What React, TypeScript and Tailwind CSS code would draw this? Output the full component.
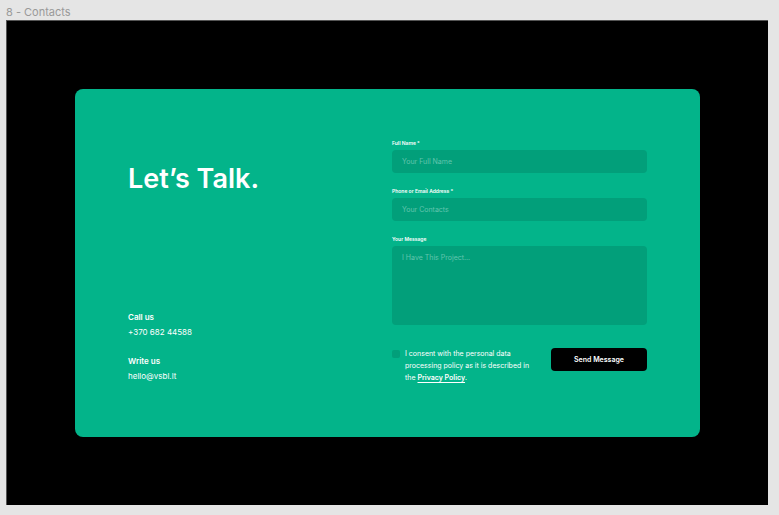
import type { ReactNode } from "react";

const fieldClass =
  "block w-full rounded bg-[#029f7a] px-[10px] text-[7px] text-white outline-none placeholder:text-[#62c5ae] placeholder:opacity-100";

function Field({ id, label, children }: { id: string; label: string; children: ReactNode }) {
  return (
    <div className="flex flex-col gap-[3px]">
      <label htmlFor={id} className="text-[5px] font-semibold leading-[8px]">
        {label}
      </label>
      {children}
    </div>
  );
}

function Contact({ title, value, href }: { title: string; value: string; href: string }) {
  return (
    <div>
      <h2 className="text-[8px] font-semibold leading-4">{title}</h2>
      <a href={href} className="block text-[8px] leading-[15px]">
        {value}
      </a>
    </div>
  );
}

export default function App() {
  return (
    <div className="flex min-h-screen flex-col bg-[#e5e5e5] pb-[10px] pl-[6px] pr-[11px] font-[Inter,sans-serif]">
      <p className="pt-1 text-[11px] leading-4 text-[#999999]">8 - Contacts</p>
      <main className="flex flex-1 flex-col border-l border-t border-[#555555] bg-black p-[68px]">
        <section className="grid flex-1 grid-cols-2 gap-[9px] rounded-lg bg-[#03b48a] px-[53px] pb-[53px] pt-[50px] text-white">
          <div className="flex flex-col justify-between">
            <h1 className="pt-5 text-[27px] font-semibold leading-10">Let’s Talk.</h1>
            <address className="flex flex-col gap-[13px] not-italic">
              <Contact title="Call us" value="+370 682 44588" href="tel:+37068244588" />
              <Contact title="Write us" value="hello@vsbl.lt" href="mailto:hello@vsbl.lt" />
            </address>
          </div>
          <form className="flex flex-col gap-[14px]" onSubmit={(e) => e.preventDefault()}>
            <Field id="name" label="Full Name *">
              <input id="name" type="text" placeholder="Your Full Name" className={`${fieldClass} h-[23px]`} />
            </Field>
            <Field id="contact" label="Phone or Email Address *">
              <input id="contact" type="text" placeholder="Your Contacts" className={`${fieldClass} h-[23px]`} />
            </Field>
            <Field id="message" label="Your Message">
              <textarea
                id="message"
                placeholder="I Have This Project..."
                className={`${fieldClass} h-[79px] resize-none py-[6px] leading-[12px]`}
              />
            </Field>
            <div className="flex items-start justify-between pt-[9px]">
              <div className="flex gap-[5px]">
                <input
                  id="consent"
                  type="checkbox"
                  className="mt-[2px] size-2 shrink-0 appearance-none rounded-[2px] bg-[#029f7a] checked:bg-black"
                />
                <label htmlFor="consent" className="text-[7px] leading-[12px]">
                  I consent with the personal data
                  <br />
                  processing policy as it is described in
                  <br />
                  the{" "}
                  <a href="#privacy" className="font-semibold underline underline-offset-2">
                    Privacy Policy
                  </a>
                  .
                </label>
              </div>
              <button type="submit" className="h-[23px] w-24 shrink-0 rounded bg-black text-[7px] font-semibold leading-[12px]">
                Send Message
              </button>
            </div>
          </form>
        </section>
      </main>
    </div>
  );
}
